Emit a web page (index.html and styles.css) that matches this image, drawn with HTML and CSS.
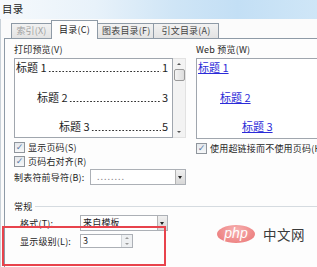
FILE: index.html
```html
<!DOCTYPE html>
<html lang="zh">
<head>
  <meta charset="UTF-8">
  <title>目录</title>
  <link rel="stylesheet" href="styles.css">
</head>
<body>
  <div class="window">
    <div class="titlebar">目录</div>

    <div class="frame">
      <div class="tabs">
        <span class="tab disabled">索引(X)</span>
        <span class="tab active">目录(C)</span>
        <span class="tab">图表目录(F)</span>
        <span class="tab">引文目录(A)</span>
      </div>

      <div class="panel">
        <div class="previews">
          <div class="col-print">
            <div class="caption">打印预览(V)</div>
            <div class="preview-wrap">
              <div class="preview">
                <div class="toc-line l1"><span>标题 1</span><span class="dots"></span><span>1</span></div>
                <div class="toc-line l2"><span>标题 2</span><span class="dots"></span><span>3</span></div>
                <div class="toc-line l3"><span>标题 3</span><span class="dots"></span><span>5</span></div>
              </div>
              <div class="scrollbar">
                <span class="arrow up"></span>
                <span class="thumb"></span>
                <span class="arrow down"></span>
              </div>
            </div>
            <div class="check"><span class="box">✓</span>显示页码(S)</div>
            <div class="check"><span class="box">✓</span>页码右对齐(R)</div>
            <div class="field">
              <span class="field-label">制表符前导符(B):</span>
              <div class="select leader"><span class="value">........</span><span class="drop"></span></div>
            </div>
          </div>

          <div class="divider"></div>

          <div class="col-web">
            <div class="caption">Web 预览(W)</div>
            <div class="preview web">
              <a class="l1">标题 1</a>
              <a class="l2">标题 2</a>
              <a class="l3">标题 3</a>
            </div>
            <div class="check"><span class="box">✓</span>使用超链接而不使用页码(H)</div>
          </div>
        </div>

        <div class="group">
          <div class="group-title"><span>常规</span><span class="rule"></span></div>
          <div class="field">
            <span class="field-label">格式(T):</span>
            <div class="select format"><span class="value">来自模板</span><span class="drop"></span></div>
          </div>
          <div class="field">
            <span class="field-label">显示级别(L):</span>
            <div class="spin"><span class="value">3</span><span class="spin-btns"><i class="up"></i><i class="down"></i></span></div>
          </div>
        </div>
      </div>
    </div>

    <div class="highlight"></div>
    <div class="watermark">
      <span class="php">php</span>
      <span class="cn">中文网</span>
    </div>
  </div>
</body>
</html>
```

FILE: styles.css
```css
body {
  margin: 0;
  font-family: "Noto Sans CJK SC", "Liberation Sans", sans-serif;
  font-size: 9px;
  letter-spacing: 0.2px;
  color: #1e1e1e;
  background: #fff;
}

.window {
  position: relative;
  width: 317px;
  height: 267px;
  overflow: hidden;
  background: #fbfbfb;
}

.titlebar {
  height: 19px;
  line-height: 18px;
  padding-left: 2px;
  font-size: 10.5px;
  color: #222;
  background: linear-gradient(90deg, #f6f9fc 0%, #e8f2fa 30%, #cfe5f6 55%, #c3dff5 75%, #cfe6f7 100%);
}

.frame {
  padding-left: 3px;
  border-left: 1px solid #c9d1d8;
}

/* tabs */
.tabs {
  display: flex;
  align-items: flex-end;
  height: 19px;
  padding-left: 7px;
}

.tab {
  height: 14px;
  line-height: 14px;
  padding: 0 4px;
  margin-right: -1px;
  border: 1px solid #8e9aa6;
  border-bottom: none;
  background: linear-gradient(#f2f2f2, #e3e3e3);
  color: #444;
  white-space: nowrap;
  text-align: center;
}

.tab.disabled {
  color: #a0a0a0;
}

.tab.active {
  position: relative;
  height: 18px;
  line-height: 18px;
  margin-bottom: -1px;
  background: #fdfdfd;
  color: #1e1e1e;
  z-index: 1;
}

.tab:nth-child(1) { width: 31px; }
.tab:nth-child(2) { width: 37px; }
.tab:nth-child(3) { width: 47px; }
.tab:nth-child(4) { width: 56px; }

.panel {
  border-top: 1px solid #8e9aa6;
  border-left: 1px solid #8e9aa6;
  background: #fdfdfd;
  padding: 4px 0 0 9px;
  height: 240px;
}

.previews {
  display: flex;
}

.col-print {
  width: 176px;
}

.caption {
  height: 14px;
  line-height: 14px;
  margin-bottom: 1px;
}

.preview-wrap {
  display: flex;
  height: 80px;
}

.preview {
  flex: 1;
  border: 1px solid #a0a6ae;
  background: #fff;
  font-size: 11px;
  letter-spacing: 0;
  padding-top: 1px;
  overflow: hidden;
}

.toc-line {
  display: flex;
  height: 15px;
  line-height: 15px;
  margin-bottom: 14.5px;
  padding-right: 4px;
  white-space: nowrap;
}

.toc-line .dots {
  flex: 1;
  margin: 0 1px;
  background-image: radial-gradient(circle, #333 0.6px, transparent 0.9px);
  background-size: 3.4px 3.4px;
  background-repeat: repeat-x;
  background-position: 0 10px;
}

.l1 { padding-left: 1px; }
.l2 { padding-left: 22px; }
.l3 { padding-left: 44px; }

.scrollbar {
  width: 12px;
  display: flex;
  flex-direction: column;
  align-items: center;
  background: #f3f3f3;
  border: 1px solid #e2e2e2;
  border-left: none;
}

.scrollbar .arrow {
  width: 0;
  height: 0;
  border-left: 2px solid transparent;
  border-right: 2px solid transparent;
  margin: 4px 0;
}

.scrollbar .up { border-bottom: 2px solid #555; }
.scrollbar .down { border-top: 2px solid #555; margin-top: auto; }

.scrollbar .thumb {
  width: 9px;
  height: 10px;
  border: 1px solid #9a9a9a;
  border-radius: 2px;
  background: linear-gradient(90deg, #f4f4f4, #dcdcdc);
}

.check {
  display: flex;
  align-items: center;
  height: 14px;
  white-space: nowrap;
}

.preview-wrap + .check,
.web + .check {
  margin-top: 2px;
}

.check .box {
  width: 9px;
  height: 9px;
  margin-right: 3px;
  border: 1px solid #8f959c;
  background: linear-gradient(#e4e8ec, #f6f7f8);
  color: #5a7ba6;
  font-size: 9px;
  line-height: 9px;
  text-align: center;
  font-family: "DejaVu Sans", sans-serif;
}

.field {
  display: flex;
  align-items: center;
  height: 16px;
  margin-top: 1px;
}

.field-label {
  width: 76px;
  white-space: nowrap;
}

.select {
  display: flex;
  height: 14px;
  border: 1px solid #acb0b6;
  background: #fff;
}

.select .value {
  flex: 1;
  line-height: 14px;
  padding-left: 2px;
  overflow: hidden;
}

.select .drop {
  position: relative;
  width: 9px;
  background: linear-gradient(#f0f0f0, #d8d8d8);
  border-left: 1px solid #b4b4b4;
}

.select .drop::after {
  content: "";
  position: absolute;
  left: 2px;
  top: 6px;
  border-left: 2.5px solid transparent;
  border-right: 2.5px solid transparent;
  border-top: 3px solid #222;
}

.leader {
  width: 94px;
}

.leader .value {
  color: #8a8a8a;
  letter-spacing: 1px;
  padding-left: 6px;
}

.divider {
  width: 1px;
  height: 156px;
  margin: 0 6px 0 4px;
  background: #d3d8dd;
}

.col-web {
  flex: 1;
}

.preview.web {
  display: flex;
  flex-direction: column;
  align-items: flex-start;
  height: 78px;
  border-right: none;
  padding-top: 1px;
}

.web a {
  color: #2b2bd8;
  text-decoration: underline;
  height: 15px;
  line-height: 15px;
  margin-bottom: 14.5px;
}

.web .l1 { margin-left: 1px; padding: 0; }
.web .l2 { margin-left: 23px; padding: 0; }
.web .l3 { margin-left: 45px; padding: 0; }

/* general group */
.group-title {
  display: flex;
  align-items: center;
  height: 14px;
}

.group-title .rule {
  flex: 1;
  height: 1px;
  margin-left: 3px;
  background: #d5dbe0;
}

.group .field {
  padding-left: 6px;
  height: 16px;
  margin-top: 2px;
}

.group .field-label {
  width: 60px;
}

.format {
  width: 86px;
}

.format .value {
  color: #222;
}

.spin {
  display: flex;
  width: 51px;
  height: 12px;
  border: 1px solid #acb0b6;
  background: #fff;
}

.spin .value {
  flex: 1;
  line-height: 12px;
  padding-left: 2px;
}

.spin-btns {
  display: flex;
  flex-direction: column;
  width: 10px;
  background: #eef0f2;
  border-left: 1px solid #d0d4d8;
}

.spin-btns i {
  flex: 1;
  display: flex;
  align-items: center;
  justify-content: center;
}

.spin-btns i::after {
  content: "";
  border-left: 2px solid transparent;
  border-right: 2px solid transparent;
}

.spin-btns .up::after { border-bottom: 2px solid #999; }
.spin-btns .down::after { border-top: 2px solid #999; }

/* overlays */
.highlight {
  position: absolute;
  left: 2px;
  top: 226px;
  width: 160px;
  height: 36px;
  border: 2px solid #e8434c;
}

.watermark {
  position: absolute;
  left: 217px;
  top: 224px;
  display: flex;
  align-items: center;
  gap: 8px;
}

.watermark .php {
  width: 38px;
  height: 18px;
  border-radius: 50%;
  background: radial-gradient(ellipse at 50% 30%, #f7b3b3 0%, #ef8b8b 60%, #e97474 100%);
  color: #fff;
  font-family: "Liberation Sans", sans-serif;
  font-style: italic;
  font-size: 14px;
  line-height: 17px;
  text-align: center;
  letter-spacing: 0;
}

.watermark .cn {
  font-size: 13.5px;
  color: #3a3a3a;
  letter-spacing: 0.5px;
}
```
